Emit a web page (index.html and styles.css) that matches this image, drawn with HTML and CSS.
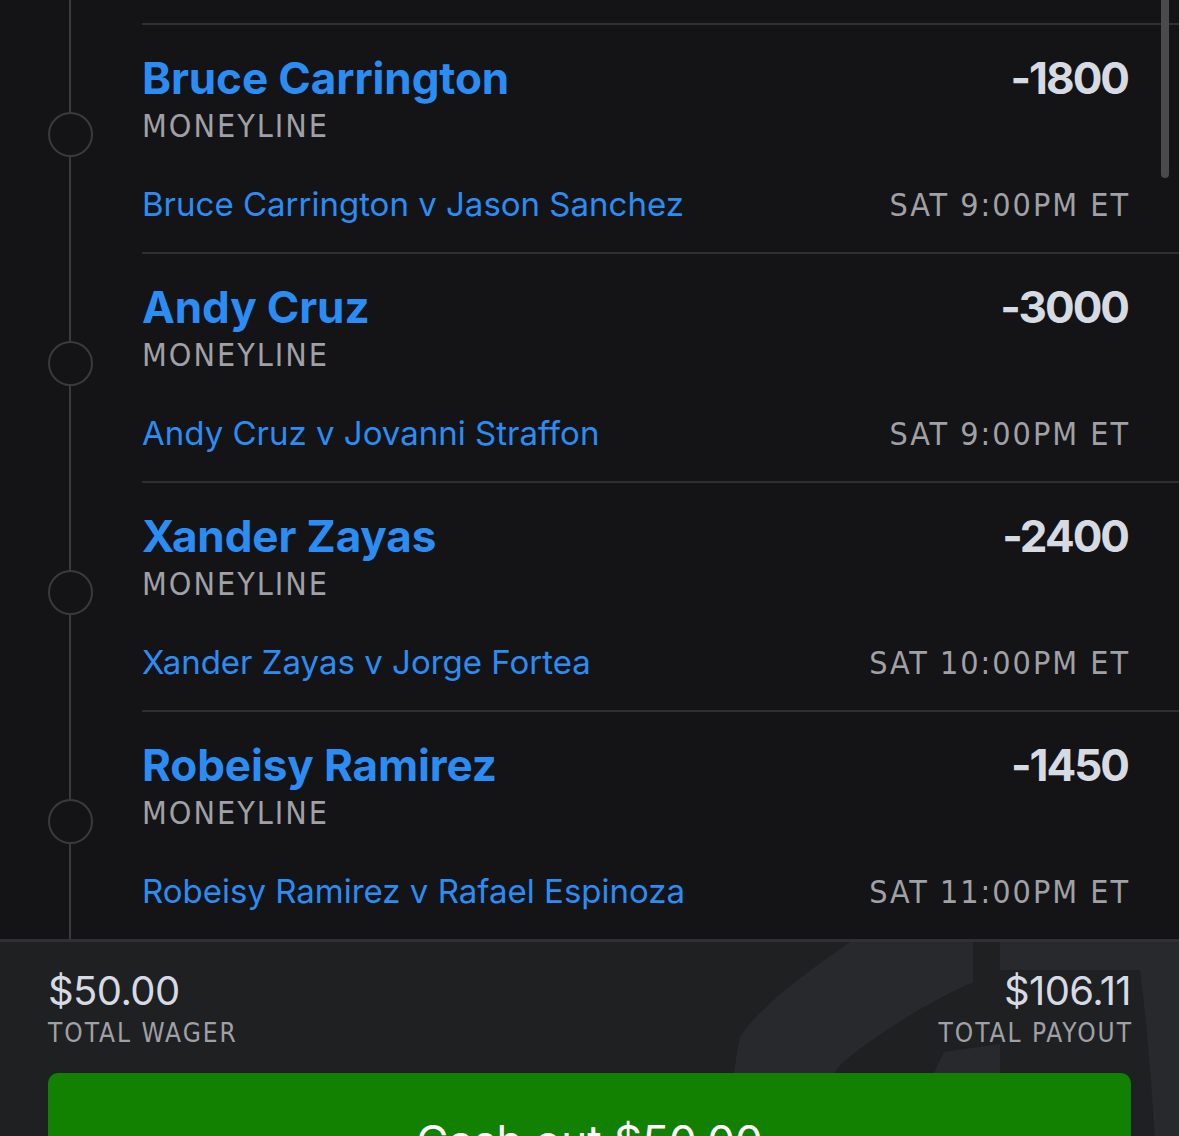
FILE: index.html
```html
<!DOCTYPE html>
<html lang="en">
<head>
    <meta charset="UTF-8">
    <meta name="viewport" content="width=device-width, initial-scale=1.0">
    <title>Bet Slip</title>
    <link rel="stylesheet" href="styles.css">
</head>
<body>
    <div class="slip">
        <div class="legs">
            <div class="leg">
                <div class="rail"><span class="dot"></span></div>
                <div class="bet">
                    <div class="bet-head">
                        <span class="pick">Bruce Carrington</span>
                        <span class="odds">-1800</span>
                    </div>
                    <div class="market">MONEYLINE</div>
                    <div class="bet-foot">
                        <span class="event">Bruce Carrington v Jason Sanchez</span>
                        <span class="time">SAT 9:00PM ET</span>
                    </div>
                </div>
            </div>
            <div class="leg">
                <div class="rail"><span class="dot"></span></div>
                <div class="bet">
                    <div class="bet-head">
                        <span class="pick">Andy Cruz</span>
                        <span class="odds">-3000</span>
                    </div>
                    <div class="market">MONEYLINE</div>
                    <div class="bet-foot">
                        <span class="event">Andy Cruz v Jovanni Straffon</span>
                        <span class="time">SAT 9:00PM ET</span>
                    </div>
                </div>
            </div>
            <div class="leg">
                <div class="rail"><span class="dot"></span></div>
                <div class="bet">
                    <div class="bet-head">
                        <span class="pick">Xander Zayas</span>
                        <span class="odds">-2400</span>
                    </div>
                    <div class="market">MONEYLINE</div>
                    <div class="bet-foot">
                        <span class="event">Xander Zayas v Jorge Fortea</span>
                        <span class="time">SAT 10:00PM ET</span>
                    </div>
                </div>
            </div>
            <div class="leg">
                <div class="rail"><span class="dot"></span></div>
                <div class="bet">
                    <div class="bet-head">
                        <span class="pick">Robeisy Ramirez</span>
                        <span class="odds">-1450</span>
                    </div>
                    <div class="market">MONEYLINE</div>
                    <div class="bet-foot">
                        <span class="event">Robeisy Ramirez v Rafael Espinoza</span>
                        <span class="time">SAT 11:00PM ET</span>
                    </div>
                </div>
            </div>
        </div>
        <div class="scrollbar"></div>

        <div class="summary">
            <!-- faded shield logo behind the totals -->
            <svg class="watermark" width="1179" height="200" viewBox="0 0 1179 200">
                <path class="shield" d="M850 0 C800 35 760 65 740 95 C733 130 730 165 727 200 L1179 200 L1179 0 Z"/>
                <path class="cut" d="M800 200 C812 170 825 140 843 120 C880 90 925 62 973 40 L973 0 L1000 0 L1000 28 L1140 28 C1148 90 1152 150 1155 200 Z"/>
                <path class="shield" d="M932 135 L944 110 L1000 102 L1000 135 Z"/>
            </svg>
            <div class="totals">
                <div class="total">
                    <span class="amount">$50.00</span>
                    <span class="label">TOTAL WAGER</span>
                </div>
                <div class="total right">
                    <span class="amount">$106.11</span>
                    <span class="label">TOTAL PAYOUT</span>
                </div>
            </div>
            <button class="cashout">Cash out $50.00</button>
        </div>
    </div>
</body>
</html>
```

FILE: styles.css
```css
body {
    margin: 0;
    background: #141416;
    font-family: Inter, Lato, sans-serif;
    overflow: hidden;
    height: 1136px;
}
.slip {
    position: relative;
    width: 1179px;
}
.legs {
    padding-top: 23px;
    background: linear-gradient(to right, transparent 69px, #3a3a3c 69px, #3a3a3c 71px, transparent 71px);
}
.leg {
    display: flex;
}
.rail {
    width: 142px;
    flex: none;
    display: flex;
    align-items: center;
}
.dot {
    box-sizing: border-box;
    width: 45px;
    height: 45px;
    margin-left: 48px;
    margin-top: -6px;
    border: 2px solid #3a3a3c;
    border-radius: 50%;
    background: #141416;
}
.bet {
    flex: 1;
    border-top: 2px solid #2f2f31;
    padding: 29px 51px 27px 0;
}
.bet-head, .bet-foot {
    display: flex;
    justify-content: space-between;
    align-items: baseline;
}
.pick {
    color: #2b8df4;
    font-weight: 700;
    font-size: 44px;
    line-height: 48px;
    letter-spacing: -0.1px;
}
.odds {
    color: #d6dae2;
    font-weight: 700;
    font-size: 44px;
    line-height: 48px;
    letter-spacing: -2px;
}
.market, .time, .label {
    font-family: "Liberation Sans Narrow", "DejaVu Sans Condensed", sans-serif;
    color: #a0a1a6;
    letter-spacing: 2px;
}
.market {
    font-size: 32px;
    line-height: 36px;
    margin-top: 6px;
}
.bet-foot {
    margin-top: 40px;
}
.event {
    color: #2b8df4;
    font-size: 33px;
    line-height: 40px;
}
.time {
    font-size: 32px;
    line-height: 40px;
    margin-right: -2px;
}
.scrollbar {
    position: absolute;
    top: 0;
    left: 1161px;
    width: 8px;
    height: 178px;
    border-radius: 0 0 4px 4px;
    background: #4a4a4c;
}
.summary {
    position: relative;
    overflow: hidden;
    border-top: 3px solid #2f3033;
    background: #1f2022;
    padding: 27px 48px 0;
}
.watermark {
    position: absolute;
    top: 0;
    left: 0;
}
.shield {
    fill: #28292c;
}
.cut {
    fill: #1f2022;
}
.totals {
    position: relative;
    display: flex;
    justify-content: space-between;
}
.total {
    display: flex;
    flex-direction: column;
}
.total.right {
    align-items: flex-end;
}
.amount {
    color: #d6dae2;
    font-size: 40px;
    line-height: 44px;
    letter-spacing: -0.6px;
}
.label {
    font-size: 26px;
    line-height: 30px;
    margin-top: 5px;
    margin-right: -2px;
}
.cashout {
    position: relative;
    display: block;
    width: 100%;
    margin-top: 25px;
    height: 110px;
    padding: 38px 0 12px;
    border: none;
    border-radius: 10px;
    background: #128000;
    color: #fff;
    font-family: Inter, Lato, sans-serif;
    font-size: 44px;
    line-height: 60px;
    text-align: center;
}
```
